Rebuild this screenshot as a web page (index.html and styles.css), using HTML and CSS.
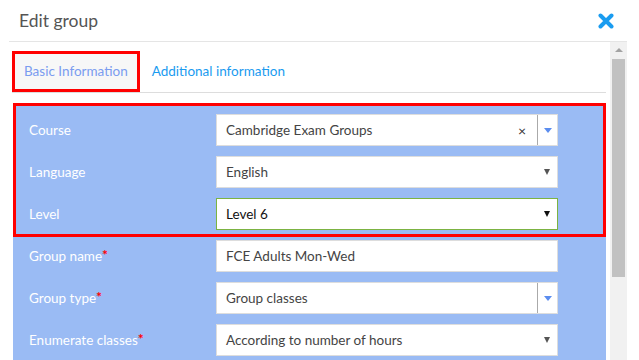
FILE: index.html
```html
<!DOCTYPE html>
<html lang="en">
<head>
    <meta charset="UTF-8">
    <title>Edit group</title>
    <link rel="stylesheet" href="styles.css">
</head>
<body>
    <div class="modal">
        <div class="modal-header">
            <h1>Edit group</h1>
            <a class="close" href="#">
                <svg width="16" height="16" viewBox="0 0 16 16">
                    <path d="M2.5 2.5 L13.5 13.5 M13.5 2.5 L2.5 13.5" stroke="#1a9cf0" stroke-width="4" stroke-linecap="round"/>
                </svg>
            </a>
        </div>
        <div class="modal-body">
            <div class="content">
                <ul class="tabs">
                    <li class="active">Basic Information</li>
                    <li>Additional information</li>
                </ul>
                <div class="panel">
                    <div class="marked">
                        <div class="row">
                            <label>Course</label>
                            <div class="field combo">
                                <span class="value">Cambridge Exam Groups</span>
                                <span class="clear">×</span>
                                <span class="toggle"></span>
                            </div>
                        </div>
                        <div class="row">
                            <label>Language</label>
                            <div class="field select">
                                <span class="value">English</span>
                            </div>
                        </div>
                        <div class="row">
                            <label>Level</label>
                            <div class="field select focus">
                                <span class="value">Level 6</span>
                            </div>
                        </div>
                    </div>
                    <div class="row">
                        <label>Group name<span class="req">*</span></label>
                        <div class="field">
                            <span class="value">FCE Adults Mon-Wed</span>
                        </div>
                    </div>
                    <div class="row">
                        <label>Group type<span class="req">*</span></label>
                        <div class="field combo">
                            <span class="value">Group classes</span>
                            <span class="toggle"></span>
                        </div>
                    </div>
                    <div class="row">
                        <label>Enumerate classes<span class="req">*</span></label>
                        <div class="field select">
                            <span class="value">According to number of hours</span>
                        </div>
                    </div>
                </div>
            </div>
            <div class="scrollbar">
                <span class="up"></span>
                <span class="thumb"></span>
            </div>
        </div>
    </div>
</body>
</html>
```

FILE: styles.css
```css
*{margin:0;padding:0;box-sizing:border-box;}
html,body{width:100%;height:100%;overflow:hidden;background:#fff;}
body{font-family:Lato,"Liberation Sans",sans-serif;}

.modal{margin-left:9px;width:618px;height:360px;overflow:hidden;}
.modal-header{
    height:42px;
    border-bottom:1px solid #e5e5e5;
    display:flex;
    align-items:center;
    justify-content:space-between;
    padding:0 13px 0 10px;
}
.modal-header h1{
    font-size:17.5px;
    font-weight:normal;
    color:#555;
}
.close{display:block;width:16px;height:16px;}
.close svg{display:block;}

.modal-body{display:flex;height:318px;}
.content{flex:1;}

/* tabs */
.tabs{
    display:flex;
    list-style:none;
    margin:9px 4px 0 3px;
    border-bottom:1px solid #ddd;
}
.tabs li{
    font-size:13.5px;
    line-height:35px;
    padding:0 9px;
    border:3px solid transparent;
    color:#1a9bf0;
}
.tabs .active{
    color:#7a9cf0;
    background:#f7f7f7;
    border-color:#f00;
}

/* form panel */
.panel{
    margin:10px 4px 0 4px;
    height:270px;
    background:#9abbf4;
}
.marked{
    outline:3px solid #f00;
    outline-offset:-3px;
    padding:6px 0 2px;
    margin-bottom:-2px;
}
.row{
    display:flex;
    align-items:center;
    height:42px;
    padding-left:16px;
}
.row label{
    width:187px;
    font-size:13.5px;
    color:#fff;
}
.req{
    color:#f00;
    font-size:14px;
    font-weight:bold;
    vertical-align:top;
    line-height:13px;
}
.field{
    width:342px;
    height:32px;
    background:#fff;
    border:1px solid #ddd;
    display:flex;
    align-items:center;
    padding-left:9px;
    font-size:13.5px;
    color:#444;
}
.field .value{flex:1;}
.select:after{
    content:"";
    margin-right:7px;
    border-top:6px solid #555;
    border-left:3px solid transparent;
    border-right:3px solid transparent;
}
.focus{border-color:#7cb342;color:#111;}
.focus:after{border-top-color:#111;}
.combo .clear{
    color:#333;
    font-size:14px;
    margin-right:11px;
}
.combo .toggle{
    width:20px;
    height:30px;
    border-left:1px solid #aaa;
    display:flex;
    align-items:center;
    justify-content:center;
}
.combo .toggle:after{
    content:"";
    border-top:5px solid #5b8def;
    border-left:4px solid transparent;
    border-right:4px solid transparent;
}

/* scrollbar */
.scrollbar{
    width:17px;
    background:#f1f1f1;
    display:flex;
    flex-direction:column;
    align-items:center;
}
.scrollbar .up{
    margin-top:6px;
    border-bottom:4px solid #a3a3a3;
    border-left:4px solid transparent;
    border-right:4px solid transparent;
}
.scrollbar .thumb{
    margin-top:7px;
    width:13px;
    height:218px;
    background:#c1c1c1;
}
```
